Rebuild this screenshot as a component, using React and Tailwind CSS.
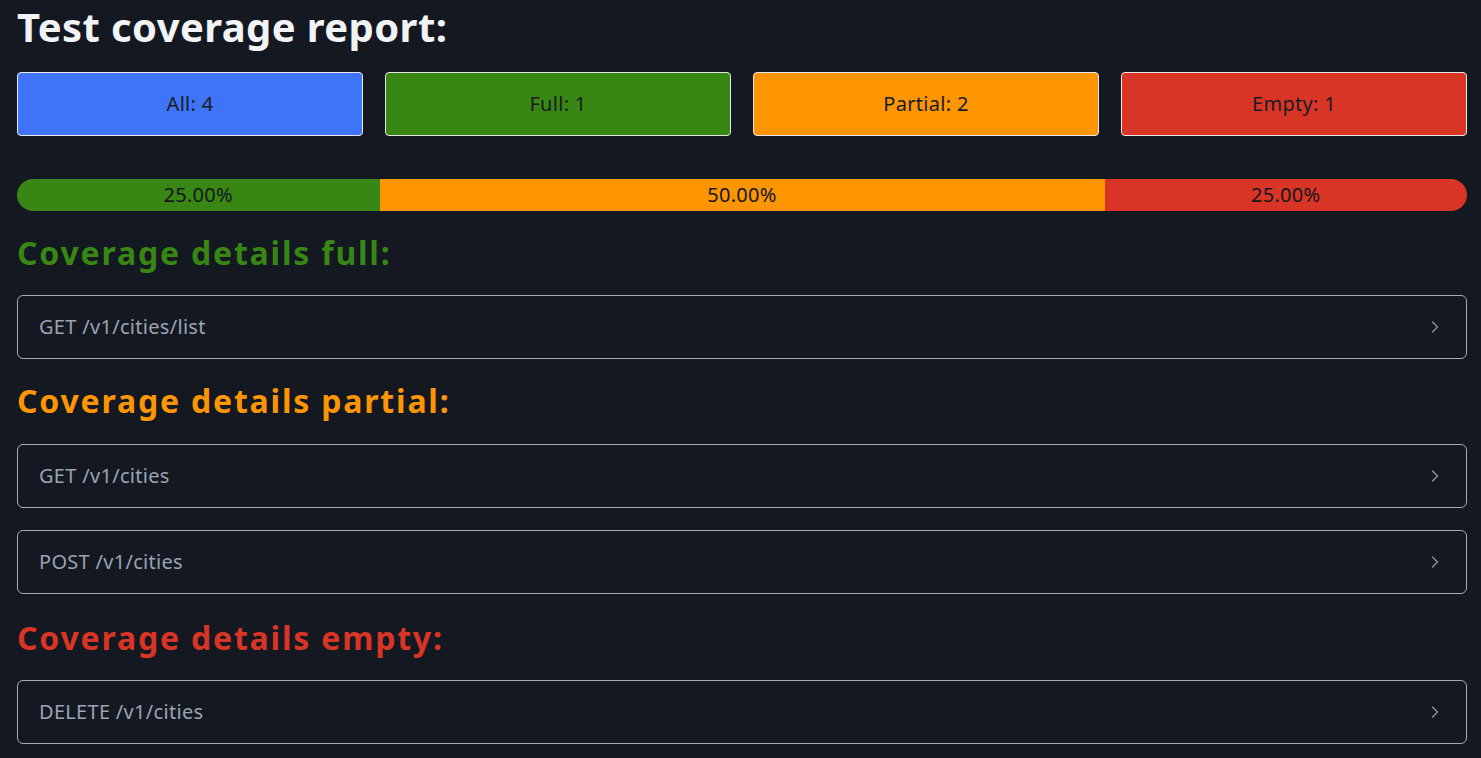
import React from "react";
import { ChevronRight } from "lucide-react";

const font = { fontFamily: '"Noto Sans", "Open Sans", sans-serif' };

function Item({ label }) {
  return (
    <div className="flex h-16 items-center justify-between rounded-md border border-[#a6abb8] px-[21px]">
      <span className="text-[20px] tracking-[0.3px] text-[#9ba3b4]">{label}</span>
      <ChevronRight size={20} strokeWidth={1.75} className="text-[#8a8f9d]" />
    </div>
  );
}

function Heading({ children, className }) {
  return (
    <h2 className={"text-[32px] font-bold leading-[40px] tracking-[1.8px] " + className}>{children}</h2>
  );
}

export default function App() {
  return (
    <div className="min-h-screen bg-[#141820] pb-6 pl-[17px] pr-[14px]" style={font}>
      <h1 className="pt-[2px] text-[40px] font-bold leading-[50px] tracking-[0.4px] text-[#f1f3f6]">
        Test coverage report:
      </h1>
      <div className="mt-5 grid grid-cols-4 gap-[22px]">
        <div className="flex h-16 items-center justify-center rounded border border-[#e8e8e8] bg-[#3d74f9] text-[20px] tracking-[0.3px] text-[#1a1c22]">All: 4</div>
        <div className="flex h-16 items-center justify-center rounded border border-[#e8e8e8] bg-[#388614] text-[20px] tracking-[0.3px] text-[#1a1c22]">Full: 1</div>
        <div className="flex h-16 items-center justify-center rounded border border-[#e8e8e8] bg-[#ff9500] text-[20px] tracking-[0.3px] text-[#1a1c22]">Partial: 2</div>
        <div className="flex h-16 items-center justify-center rounded border border-[#e8e8e8] bg-[#d93527] text-[20px] tracking-[0.3px] text-[#1a1c22]">Empty: 1</div>
      </div>
      <div className="mt-[43px] flex h-8 overflow-hidden rounded-full text-[20px] tracking-[0.3px] text-[#15171c]">
        <div className="flex w-1/4 items-center justify-center bg-[#388614]">25.00%</div>
        <div className="flex w-1/2 items-center justify-center bg-[#ff9500]">50.00%</div>
        <div className="flex w-1/4 items-center justify-center bg-[#d93527]">25.00%</div>
      </div>
      <div className="mt-[22px] flex flex-col gap-[22px]">
        <Heading className="text-[#388614]">Coverage details full:</Heading>
        <Item label="GET /v1/cities/list" />
        <Heading className="mb-[1px] text-[#ff9500]">Coverage details partial:</Heading>
        <Item label="GET /v1/cities" />
        <Item label="POST /v1/cities" />
        <Heading className="mt-[2px] text-[#d93527]">Coverage details empty:</Heading>
        <Item label="DELETE /v1/cities" />
      </div>
    </div>
  );
}
